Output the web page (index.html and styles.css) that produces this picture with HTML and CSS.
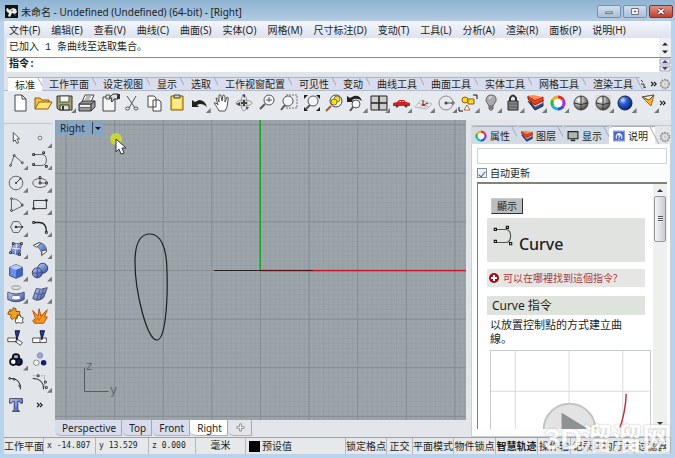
FILE: index.html
```html
<!DOCTYPE html>
<html lang="zh-CN">
<head>
<meta charset="utf-8">
<title>未命名 - Undefined</title>
<link rel="stylesheet" href="styles.css">
</head>
<body>
<svg class="defs" aria-hidden="true">
  <defs>
    <linearGradient id="blue" x1="0" y1="0" x2="1" y2="1"><stop offset="0" stop-color="#c3d2fb"/><stop offset="1" stop-color="#2b4fb0"/></linearGradient>
    <radialGradient id="gray" cx=".35" cy=".3" r=".8"><stop offset="0" stop-color="#fff"/><stop offset=".5" stop-color="#999"/><stop offset="1" stop-color="#333"/></radialGradient>
    <radialGradient id="ball" cx=".35" cy=".3" r=".8"><stop offset="0" stop-color="#cfe0ff"/><stop offset=".35" stop-color="#2c60d8"/><stop offset="1" stop-color="#04186c"/></radialGradient>
    <symbol id="wheel" viewBox="0 0 22 22"><circle cx="11" cy="11" r="6" fill="#fff"/><g fill="none" stroke-width="3"><path stroke="#e8302a" d="M11 5a6 6 0 0 1 5.200 3"/><path stroke="#b22ac8" d="M16.200 8a6 6 0 0 1 0 6"/><path stroke="#3450e0" d="M16.200 14a6 6 0 0 1-5.200 3"/><path stroke="#1cb8c8" d="M11 17a6 6 0 0 1-5.200-3"/><path stroke="#36b83a" d="M5.800 14a6 6 0 0 1 0-6"/><path stroke="#f0b020" d="M5.800 8A6 6 0 0 1 11 5"/></g></symbol>
    <symbol id="layers" viewBox="0 0 22 22"><path d="M3 9l7 9 8-4v-3l-8 3z" fill="#2448a8" stroke="#223"/><path d="M3 6l7 9 8-4V8l-8 3z" fill="#fff" stroke="#666"/><path d="M3 4l7 4 8-3v4l-8 4-7-6z" fill="#e8401c" stroke="#8a1c0c"/><path d="M3 4l5-1 10 2-8 3z" fill="#ff8a5c"/></symbol>
    <symbol id="gear" viewBox="0 0 22 22"><circle cx="11" cy="11" r="8" fill="none" stroke="#888" stroke-width="3" stroke-dasharray="3 2"/><circle cx="11" cy="11" r="6" fill="#eee" stroke="#888"/><circle cx="11" cy="11" r="2" fill="#fff" stroke="#888"/></symbol>
    <symbol id="lens" viewBox="0 0 22 22"><circle cx="13" cy="8" r="5" fill="#f3f5f7" stroke="#555"/><path d="M9 12l-5 5" stroke="#555" stroke-width="2"/></symbol>
    <symbol id="more" viewBox="0 0 22 22"><path d="M3 5l6 6-6 6M11 5l6 6-6 6" fill="none" stroke="#111" stroke-width="3"/></symbol>
    <symbol id="curve" viewBox="0 0 22 22"><path d="M5 5h8q5 0 5 6t-5 6H5" fill="none" stroke="#555"/><path d="M3 4h2v2H3zM14 2h2v2h-2zM3 15h2v2H3zM17 17h2v2h-2z" fill="#fff" stroke="#111"/></symbol>
  </defs>
</svg>

<div class="window">
  <header class="title">
    <svg class="logo" viewBox="0 0 13 13"><path d="M0 0h13v13H0z" fill="#111"/><path d="M1 4l2-1 1 2 4-2 3 1 1 3-2 2-3-1-2 4-2-1 1-3-2-1z" fill="#e8ece8"/><path d="M6 6l2-1M9 9l2 2" stroke="#555"/></svg>
    <h1>未命名 - Undefined (Undefined) (64-bit) - [Right]</h1>
    <button class="win" aria-label="最小化"><svg viewBox="0 0 24 13"><path d="M8 7h8v2H8z" fill="#fff" stroke="#555"/></svg></button>
    <button class="win" aria-label="还原"><svg viewBox="0 0 24 13"><path d="M8 3h8v7H8zM11 6h2v1h-2z" fill="#fff" stroke="#555"/></svg></button>
    <button class="win close" aria-label="关闭"><svg viewBox="0 0 24 13"><path d="M9 4l6 5M15 4l-6 5" stroke="#633" stroke-width="4"/><path d="M9 4l6 5M15 4l-6 5" stroke="#fff" stroke-width="2"/></svg></button>
  </header>

  <nav class="menu">
    <button>文件(F)</button><button>编辑(E)</button><button>查看(V)</button><button>曲线(C)</button><button>曲面(S)</button><button>实体(O)</button><button>网格(M)</button><button>尺寸标注(D)</button><button>变动(T)</button><button>工具(L)</button><button>分析(A)</button><button>渲染(R)</button><button>面板(P)</button><button>说明(H)</button>
  </nav>

  <section class="command">
    <div class="history"><p>已加入 1 条曲线至选取集合。</p><svg class="arrows" viewBox="0 0 12 18"><path d="M3 7l3-3 3 3zM3 12l3 3 3-3z" fill="#222"/></svg></div>
    <div class="prompt"><label for="cmd">指令:</label><input id="cmd" type="text"><svg class="arrows" viewBox="0 0 12 14"><path d="M1 1h10v5H1zM1 8h10v5H1z" fill="#e4e8f4" stroke="#aab"/><path d="M3 5l3-3 3 3zM3 9l3 3 3-3z" fill="#446"/></svg></div>
  </section>

  <nav class="tabs">
    <button class="on">标准</button><button>工作平面</button><button>设定视图</button><button>显示</button><button>选取</button><button>工作视窗配置</button><button>可见性</button><button>变动</button><button>曲线工具</button><button>曲面工具</button><button>实体工具</button><button>网格工具</button><button>渲染工具</button><span class="tab-end"><svg class="tick" viewBox="0 0 6 12"><path d="M1 2l2 2M1 6h3v4l2-1" fill="none" stroke="#333"/></svg><svg viewBox="0 0 22 22"><use href="#more"/></svg><svg class="cog" viewBox="0 0 22 22"><use href="#gear"/></svg></span>
  </nav>

  <div class="bar">
    <div class="tools">
      <button aria-label="新建"><svg viewBox="0 0 22 22"><path d="M6 3h7l4 4v12H6z" fill="#fff" stroke="#444"/><path d="M13 3v4h4" fill="none" stroke="#444"/></svg></button>
      <button aria-label="打开"><svg viewBox="0 0 22 22"><path d="M3 17V6h5l2 2h7v3" fill="#f4c23c" stroke="#8a5c08"/><path d="M3 17l4-7h13l-4 7z" fill="#ffe27c" stroke="#8a5c08"/></svg></button>
      <button class="fly" aria-label="保存"><svg viewBox="0 0 22 22"><path d="M3 4h15v14H5l-2-2z" fill="#a3a762" stroke="#333"/><path d="M6 4h9v6H6z" fill="#f4f4ee" stroke="#555"/><path d="M6 13h9v5H6z" fill="#ddd" stroke="#333"/><path d="M8 14h2v4H8z" fill="#333"/></svg></button>
      <button aria-label="打印"><svg viewBox="0 0 22 22"><path d="M6 10l3-7h9l-3 7z" fill="#fff" stroke="#444"/><path d="M10 5h5M9 7h5" stroke="#777"/><path d="M3 12l4-3h12v6l-4 4H3z" fill="#999" stroke="#333"/><path d="M3 12h12v7M15 12l4-3M4 15h10" fill="none" stroke="#333"/><path d="M4 13h10v2H4z" fill="#eee"/></svg></button>
      <button aria-label="属性"><svg viewBox="0 0 22 22"><path d="M4 5h12v14H4z" fill="#f4f4f4" stroke="#444"/><path d="M7 3h4v4H7z" fill="#ddd" stroke="#555"/><path d="M10 6l4-4h5v5h-4l-2 3-1-1 1-3z" fill="#ddd" stroke="#333"/><path d="M18 2h3v5h-3z" fill="#333"/></svg></button>
      <button aria-label="剪切"><svg viewBox="0 0 22 22"><path d="M6 4l8 12M15 4L8 16" stroke="#555" fill="none"/><ellipse cx="6.500" cy="16.500" rx="2" ry="1.500" fill="none" stroke="#555"/><ellipse cx="15" cy="16.500" rx="2" ry="1.500" fill="none" stroke="#555"/></svg></button>
      <button aria-label="复制"><svg viewBox="0 0 22 22"><path d="M4 4h6l2 2v9H4zM9 8h6l2 2v9H9z" fill="#fff" stroke="#444"/></svg></button>
      <button aria-label="粘贴"><svg viewBox="0 0 22 22"><path d="M5 4h12v14H5z" fill="#ffd94c" stroke="#7a5a08"/><path d="M7 7h8v9H7z" fill="#ffeb8c"/><path d="M8 3h6v3H8z" fill="#ccc" stroke="#444"/></svg></button>
      <button class="fly" aria-label="撤销"><svg viewBox="0 0 22 22"><path d="M3 8v7h7l-2-2q5-3 10 2-2-7-8-7l-4 2z" fill="#222"/></svg></button>
      <button aria-label="平移"><svg viewBox="0 0 22 22"><path d="M8 19q-1-3-5-8 2-1 4 2L5 6q2-1 3 4V3q2-1 2 1l1 5 1-6q2 0 2 2v5l2-5q2 0 1 3l-1 7q-1 2-2 4z" fill="#fff" stroke="#555"/></svg></button>
      <button aria-label="旋转视图"><svg viewBox="0 0 22 22"><g fill="none" stroke="#999"><ellipse cx="11" cy="11" rx="8" ry="3"/><ellipse cx="11" cy="11" rx="3" ry="8"/></g><path d="M11 8v6M8 11h6" stroke="#444" stroke-width="2"/><path d="M9 3l3-1v4zM3 12l4-2v4zM13 15h3l-2 3z" fill="#446"/></svg></button>
      <button aria-label="缩放"><svg viewBox="0 0 22 22"><use href="#lens"/><path d="M10 8h6M13 5v5" stroke="#555"/></svg></button>
      <button aria-label="框选缩放"><svg viewBox="0 0 22 22"><path d="M8 3h11v13H8z" fill="none" stroke="#777" stroke-dasharray="2 1"/><circle cx="10" cy="9" r="5" fill="#f3f5f7" stroke="#555"/><path d="M7 13l-4 5" stroke="#555" stroke-width="2"/></svg></button>
      <button aria-label="缩放至最大范围"><svg viewBox="0 0 22 22"><circle cx="12" cy="9" r="5" fill="#f3f5f7" stroke="#555"/><path d="M9 13l-4 4" stroke="#555" stroke-width="2"/><path d="M3 3h4L3 7zM19 3h-4l4 4zM3 19v-4l4 4zM19 19h-4l4-4z" fill="#222"/></svg></button>
      <button aria-label="缩放至选取物件"><svg viewBox="0 0 22 22"><circle cx="13" cy="9" r="6" fill="#f8f8e8" stroke="#444"/><circle cx="14" cy="7" r="3" fill="#ffe000" stroke="#776"/><circle cx="11" cy="10" r="3" fill="#ffe000" stroke="#776"/><path d="M8 14l-5 5" stroke="#a85c28" stroke-width="2"/></svg></button>
      <button class="fly" aria-label="复原视图"><svg viewBox="0 0 22 22"><path d="M2 4v6h7L7 8q5-3 10 1-2-6-8-5L5 6z" fill="#222"/><circle cx="11" cy="12" r="4" fill="#f3f5f7" stroke="#555"/><path d="M8 15l-3 4" stroke="#555" stroke-width="2"/></svg></button>
      <button class="fly" aria-label="四视图"><svg viewBox="0 0 22 22"><path d="M3 4h16v14H3z" fill="#ccc" stroke="#222"/><path d="M11 4v14M3 11h16" stroke="#222" stroke-width="1.500"/></svg></button>
      <button class="fly" aria-label="载具视图"><svg viewBox="0 0 22 22"><path d="M3 11l4-1 2-2h5l2 2 4 1v3H3z" fill="#d42020"/><path d="M10 9h1v1H9zM12 9h1l1 1h-2z" fill="#fcc"/><circle cx="7" cy="14" r="1.500" fill="#444"/><circle cx="16" cy="14" r="1.500" fill="#444"/></svg></button>
      <button class="fly" aria-label="设定工作平面"><svg viewBox="0 0 22 22"><path d="M2 15l6-7 11 4-5 5zM5 11l11 4M11 9l-4 7M15 11l-4 6" fill="none" stroke="#bbb"/><path d="M10 13V8M10 13l5-2" stroke="#444"/><path d="M9 12h3v2H9z" fill="#a33"/></svg></button>
      <button class="fly" aria-label="物件锁点"><svg viewBox="0 0 22 22"><circle cx="11" cy="11" r="7" fill="none" stroke="#888"/><path d="M11 11h8" stroke="#555"/><circle cx="11" cy="11" r="1.500" fill="#444"/><path d="M17 10h2v2h-2z" fill="#fff" stroke="#555"/></svg></button>
      <button class="fly" aria-label="选取"><svg viewBox="0 0 22 22"><circle cx="8" cy="8" r="3" fill="#ffd820" stroke="#876010"/><path d="M11 7h6v5h-6z" fill="#ffd820" stroke="#876010"/><path d="M7 18l3-5 3 5z" fill="#fff" stroke="#a65"/><path d="M16 3h4v4M2 15v4h4" fill="none" stroke="#111"/></svg></button>
      <button class="fly" aria-label="隐藏"><svg viewBox="0 0 22 22"><path d="M11 3q6 0 5 6l-3 5v3q-2 3-4 0v-3L6 9q0-6 5-6z" fill="#aaa" stroke="#666"/><path d="M9 7q1-3 3-2" fill="none" stroke="#fff"/><path d="M9 14h4M9 16h4" stroke="#555"/></svg></button>
      <button class="fly" aria-label="锁定"><svg viewBox="0 0 22 22"><path d="M8 10V6q3-5 6 0v4" fill="none" stroke="#333" stroke-width="2"/><path d="M6 9h10v9H6z" fill="#888" stroke="#222"/><path d="M7 12h8M7 15h8" stroke="#555"/></svg></button>
      <button class="fly" aria-label="图层"><svg viewBox="0 0 22 22"><use href="#layers"/></svg></button>
      <button class="fly" aria-label="颜色"><svg viewBox="0 0 22 22"><use href="#wheel"/></svg></button>
      <button aria-label="着色"><svg viewBox="0 0 22 22"><circle cx="11" cy="11" r="7" fill="url(#gray)" stroke="#444"/><path d="M11 4v14M4 11q7 3 14 0" fill="none" stroke="#333"/></svg></button>
      <button class="fly" aria-label="着色模式"><svg viewBox="0 0 22 22"><path d="M3 3h16v16H3z" fill="#ddd"/><circle cx="11" cy="11" r="7" fill="url(#gray)" stroke="#444"/><path d="M11 4v14M4 11q7 3 14 0" fill="none" stroke="#333"/></svg></button>
      <button class="fly" aria-label="渲染"><svg viewBox="0 0 22 22"><circle cx="11" cy="11" r="7" fill="url(#ball)" stroke="#123"/></svg></button>
      <button class="fly" aria-label="灯光"><svg viewBox="0 0 22 22"><path d="M5 5l12-2-3 11z" fill="#ffb428" stroke="#c05c10"/><path d="M5 5l12-2-5 5z" fill="#fff4c0" stroke="#555"/></svg></button>
    </div>
    <button class="overflow" aria-label="更多"><svg viewBox="0 0 22 22"><use href="#more"/></svg></button>
  </div>

  <main>
    <aside class="toolbox">
      <button aria-label="选择"><svg viewBox="0 0 22 22"><path d="M8 5v10l2-2 2 4 2-1-2-4h3z" fill="#fff" stroke="#444"/></svg></button>
      <button class="fly" aria-label="点"><svg viewBox="0 0 22 22"><circle cx="11" cy="11" r="2" fill="#fff" stroke="#666"/></svg></button>
      <button class="fly" aria-label="多重直线"><svg viewBox="0 0 22 22"><path d="M5 17L9 6l9 8" fill="none" stroke="#555"/><g fill="#fff" stroke="#222"><circle cx="5" cy="17" r="1"/><circle cx="9" cy="6" r="1"/><circle cx="18" cy="14" r="1"/></g></svg></button>
      <button class="fly" aria-label="曲线"><svg viewBox="0 0 22 22"><use href="#curve"/></svg></button>
      <button class="fly" aria-label="圆"><svg viewBox="0 0 22 22"><circle cx="11" cy="11" r="7.500" fill="none" stroke="#555"/><path d="M11 11l5-5" stroke="#222"/><circle cx="11" cy="11" r="1" fill="#222"/><circle cx="16" cy="6" r="1" fill="#222"/></svg></button>
      <button class="fly" aria-label="椭圆"><svg viewBox="0 0 22 22"><ellipse cx="11" cy="11" rx="8" ry="5" fill="none" stroke="#555"/><path d="M11 11V5M11 11h7" stroke="#555"/><path d="M10 10h2v2h-2zM10 4h2v2h-2zM17 10h2v2h-2z" fill="#fff" stroke="#222"/></svg></button>
      <button class="fly" aria-label="圆弧"><svg viewBox="0 0 22 22"><path d="M6 4v14l12-6Q15 4 6 4" fill="none" stroke="#555"/><g fill="#fff" stroke="#222"><circle cx="6" cy="4" r="1"/><circle cx="6" cy="17" r="1"/><circle cx="18" cy="11" r="1"/></g></svg></button>
      <button class="fly" aria-label="矩形"><svg viewBox="0 0 22 22"><path d="M4 6h14v9H4z" fill="none" stroke="#222"/><circle cx="4" cy="15" r="1.500" fill="#333"/><circle cx="18" cy="6" r="1.500" fill="#333"/></svg></button>
      <button class="fly" aria-label="多边形"><svg viewBox="0 0 22 22"><path d="M5 11l3-6h6l4 6-4 6H8z" fill="none" stroke="#555"/><path d="M11 11h7" stroke="#222"/><circle cx="11" cy="11" r="1.500" fill="#333"/><circle cx="18" cy="11" r="1" fill="#333"/></svg></button>
      <button class="fly" aria-label="圆角"><svg viewBox="0 0 22 22"><path d="M5 6h5q8 0 8 10" fill="none" stroke="#222" stroke-width="1.500"/><path d="M3 5h2v2H3zM17 16h2v2h-2z" fill="#fff" stroke="#111"/></svg></button>
      <button class="fly" aria-label="曲面"><svg viewBox="0 0 22 22"><path d="M8 5h9l-2 13-10-3z" fill="url(#blue)" stroke="#557"/><path d="M12 5l-2 12M6 10l10 1" stroke="#eef"/><path d="M7 4h2v2H7zM16 4h2v2h-2zM14 16h2v2h-2zM4 14h2v2H4z" fill="#fff" stroke="#222"/></svg></button>
      <button class="fly" aria-label="旋转曲面"><svg viewBox="0 0 22 22"><path d="M4 7l6-3q8 1 8 9l-5 5q0-9-9-11z" fill="url(#blue)" stroke="#557"/><path d="M4 7l6-3 2 1-5 4zM13 13l5-1v2l-5 4z" fill="#fff" stroke="#444"/></svg></button>
      <button class="fly" aria-label="立方体"><svg viewBox="0 0 22 22"><path d="M4 7l7-3 7 3v9l-7 3-7-3z" fill="#6c90e8" stroke="#346"/><path d="M4 7l7-3 7 3-7 3z" fill="#b8ccff"/><path d="M11 10l7-3v9l-7 3z" fill="#3f65c0"/></svg></button>
      <button class="fly" aria-label="布尔运算"><svg viewBox="0 0 22 22"><circle cx="14" cy="8" r="5.500" fill="url(#blue)" stroke="#335"/><circle cx="8" cy="13" r="5.500" fill="url(#blue)" stroke="#335"/><path d="M8 8v10M3 13q5 2 10-1" fill="none" stroke="#446"/></svg></button>
      <button class="fly" aria-label="投影曲线"><svg viewBox="0 0 22 22"><ellipse cx="11" cy="4" rx="5" ry="2" fill="none" stroke="#888"/><path d="M2 9q9 4 18 0v8q-9 5-18 0z" fill="url(#blue)" stroke="#446"/><ellipse cx="11" cy="15" rx="5" ry="2.500" fill="#fff" stroke="#668"/></svg></button>
      <button class="fly" aria-label="网格"><svg viewBox="0 0 22 22"><path d="M7 5q5 2 12-1l-4 11q-6 5-12 1z" fill="url(#blue)" stroke="#446"/><path d="M5 10q6 3 12 0M11 6l-4 12M15 5l-4 12" fill="none" stroke="#557"/></svg></button>
      <button aria-label="组合"><svg viewBox="0 0 22 22"><path d="M13 10h3v2l3 1-1 3 1 2-3 1-2-1-3 1-1-4 2-1z" fill="#fff" stroke="#444"/><path d="M4 4l3 1 1-3 3 1v3l4 0 0 4-3 0v4l-3-1-2 2-2-2 1-3-4-1 1-3 2 0z" fill="#f5a01c" stroke="#7a4c08"/></svg></button>
      <button aria-label="炸开"><svg viewBox="0 0 22 22"><path d="M3 5l6 6 1-8 2 8 7-7-3 8 3 0-4 7H5l-2-3 3-2z" fill="#f59a18" stroke="#b04810"/><path d="M5 18l4-5 1 3 5-8" fill="none" stroke="#c86018"/></svg></button>
      <button aria-label="修剪"><svg viewBox="0 0 22 22"><path d="M2 11h10v4H2zM12 12l6 4-2 3-6-4z" fill="#fff" stroke="#444"/><path d="M10 3h5l-3 10z" fill="#243c9c" stroke="#113"/></svg></button>
      <button aria-label="分割"><svg viewBox="0 0 22 22"><path d="M3 11h15v5H3zM11 11v5" fill="#fff" stroke="#444"/><path d="M11 3h5l-3 10z" fill="#243c9c" stroke="#113"/></svg></button>
      <button class="fly" aria-label="群组"><svg viewBox="0 0 22 22"><g stroke="#111" stroke-width="2"><circle cx="11" cy="8" r="3.500" fill="#99a4e8"/><circle cx="14" cy="13" r="3.500" fill="#151d70"/><circle cx="8" cy="13" r="3.500" fill="#fff"/></g></svg></button>
      <button aria-label="解散群组"><svg viewBox="0 0 22 22"><circle cx="11" cy="6" r="3" fill="#99a4e8" stroke="#88a"/><circle cx="7" cy="14" r="3" fill="#fff" stroke="#777"/><circle cx="15" cy="14" r="3" fill="#151d70"/></svg></button>
      <button aria-label="编辑点"><svg viewBox="0 0 22 22"><path d="M4 6q12-1 12 12" fill="none" stroke="#111"/><g fill="#fff" stroke="#111"><circle cx="4" cy="6" r="1"/><circle cx="9" cy="7" r="1"/><circle cx="15" cy="14" r="1"/></g></svg></button>
      <button class="fly" aria-label="控制点"><svg viewBox="0 0 22 22"><path d="M3 6q12 0 12 12" fill="none" stroke="#111"/><path d="M3 3h13v14" fill="none" stroke="#999" stroke-dasharray="2 1"/><path d="M8 2h2v2H8zM16 9h2v2h-2zM17 15h2v2h-2z" fill="#fff" stroke="#333"/></svg></button>
      <button aria-label="文字物件"><svg viewBox="0 0 22 22"><path d="M4 4h14v5h-2l-1-2h-2v9l2 2H7l2-2V7H7L6 9H4z" fill="url(#blue)" stroke="#335"/></svg></button>
      <button aria-label="更多工具"><svg class="small" viewBox="0 0 22 22"><use href="#more"/></svg></button>
    </aside>

    <section class="view">
      <div class="canvas">
        <svg class="scene">
          <defs>
            <pattern id="minor" width="4.860" height="4.860" patternUnits="userSpaceOnUse" x="205" y="150"><path d="M.5 0v4.860M0 .5h4.860" stroke="#919a9f" fill="none" stroke-width=".6"/></pattern>
            <pattern id="major" width="48.600" height="48.600" patternUnits="userSpaceOnUse" x="205" y="150"><path d="M.5 0v48.600M0 .5h48.600" stroke="#848c91" fill="none"/></pattern>
          </defs>
          <rect width="100%" height="100%" fill="url(#minor)"/>
          <rect width="100%" height="100%" fill="url(#major)"/>
          <rect x="204.500" width="1.500" height="150" fill="#18a028"/>
          <rect x="205" y="149.800" width="100%" height="1.500" fill="#c81c24"/>
          <rect x="159" y="150" width="46" height="1" fill="#222"/>
          <rect x="205" y="150" width="53" height="1" fill="#5a1014"/>
          <path d="M95 114C85 114 80 124 80 142C80 172 92 220 102 220C110 220 113 184 112 152C112 126 105 114 95 114z" fill="none" stroke="#1c1f20" stroke-width="1.200"/>
          <path d="M29.500 248v23.500h24" fill="none" stroke="#555d61"/>
          <text x="31" y="250">z</text><text x="55" y="274">y</text>
        </svg>
        <button class="label">Right<span></span></button>
        <svg class="cursor" viewBox="0 0 20 24"><circle cx="6" cy="7" r="6" fill="#c8d43c"/><path d="M6 7v13l3-3 2 5 3-1-2-5h4z" fill="#fff" stroke="#333"/></svg>
      </div>
      <nav class="sheets"><button>Perspective</button><button>Top</button><button>Front</button><button class="on">Right</button><button class="add" aria-label="新增"><svg viewBox="0 0 10 10"><path d="M4 1h2v3h3v2H6v3H4V6H1V4h3z" fill="#fff" stroke="#888"/></svg></button></nav>
    </section>

    <aside class="panel">
      <nav class="ptabs">
        <button><svg viewBox="3 3 16 16"><use href="#wheel" width="22" height="22"/></svg>属性</button>
        <button><svg viewBox="2 2 17 17"><use href="#layers" width="22" height="22"/></svg>图层</button>
        <button><svg viewBox="0 0 22 22"><path d="M2 3h18v13H2z" fill="#aab8b0" stroke="#222" stroke-width="2"/><path d="M7 19h8" stroke="#222" stroke-width="3"/></svg>显示</button>
        <button class="on"><svg viewBox="0 0 22 22"><path d="M1 2h20v18H1z" fill="#4466c4" stroke="#8aa0dc" stroke-width="2"/><path d="M6 16v-6q5-7 10 0v6M9 10q2-3 4 0l-2 3v1M11 16v2" fill="none" stroke="#fff" stroke-width="2"/></svg>说明</button>
        <svg class="pgear" viewBox="0 0 22 22"><use href="#gear"/></svg>
      </nav>
      <div class="pbody">
        <input class="search" type="text" aria-label="搜索">
        <label class="auto"><input type="checkbox" checked>自动更新</label>
        <div class="help">
          <article>
            <button class="show">顯示</button>
            <h2><svg viewBox="0 0 22 22"><use href="#curve"/></svg>Curve</h2>
            <a class="where" href="#where"><svg viewBox="0 0 10 10"><circle cx="5" cy="5" r="5" fill="#a01420"/><path d="M5 2v6M2 5h6" stroke="#fff" stroke-width="2"/></svg>可以在哪裡找到這個指令?</a>
            <h3>Curve 指令</h3>
            <p>以放置控制點的方式建立曲線。</p>
            <div class="video"><svg viewBox="0 0 160 110"><path d="M24.500 0v110M78.500 0v110M132.500 0v110M0 40.500h160" stroke="#dcdcde"/><path d="M136 43q-1 25-11 45" fill="none" stroke="#b43840" stroke-width="1.500"/><circle cx="79" cy="79" r="26" fill="#e2e3e2" stroke="#c2c4c4" stroke-width="2"/><path d="M71 62l26 16-26 16z" fill="#8f9292"/></svg></div>
          </article>
          <div class="scroll"><svg viewBox="0 0 12 12"><path d="M3 8l3-3 3 3z" fill="#333"/></svg><span class="thumb"></span><svg class="down" viewBox="0 0 12 12"><path d="M3 5l3 3 3-3z" fill="#333"/></svg></div>
        </div>
      </div>
    </aside>
  </main>

  <footer>
    <button>工作平面</button><span class="num">x -14.807</span><span class="num">y 13.529</span><span class="num">z 0.000</span><span class="unit">毫米</span><button class="layer"><i></i>预设值</button><button>锁定格点</button><button>正交</button><button>平面模式</button><button>物件锁点</button><button class="bold">智慧轨迹</button><button>操作轴</button><button>记录建构历史</button><button>过滤器</button>
  </footer>
  <div class="mark">3D溜溜网</div>
</div>
</body>
</html>
```
FILE: styles.css
```css
* { box-sizing: border-box; }
body {
  margin: 0;
  font: 10px/14px "Noto Sans", "Noto Sans CJK SC", sans-serif;
  color: #1c1e22;
}
button {
  margin: 0;
  padding: 0;
  border: 0;
  background: none;
  color: inherit;
  font: inherit;
  white-space: nowrap;
}
h1, h2, h3, p { margin: 0; font: inherit; }
svg { display: block; }
.defs { position: absolute; width: 0; height: 0; }

.window {
  position: relative;
  display: flex;
  flex-direction: column;
  height: 100vh;
  padding: 0 4px 4px;
  overflow: hidden;
  background: #b9d3ec;
}

.title {
  display: flex;
  align-items: center;
  gap: 2px;
  height: 21px;
  margin: 0 -4px;
  padding: 2px 2px 0 5px;
  background: linear-gradient(#8fb4d2, #a3c1dc 60%, #b5cbe2);
}
.logo { width: 13px; height: 13px; }
.title h1 { flex: 1; padding-left: 1px; }
.win {
  width: 24px;
  height: 13px;
  border: 1px solid #7890aa;
  border-radius: 2px;
  background: linear-gradient(#cfdfee, #a9c1da);
}
.win.close { border-color: #7a3434; background: linear-gradient(#dc9488, #c0402c); }
.win svg { width: 100%; height: 100%; }

.menu {
  display: flex;
  gap: 11px;
  height: 17px;
  padding-left: 5px;
  background: linear-gradient(#f4f6fb, #dde2ef);
}

.command { padding: 0 0 5px 3px; background: #dfe3ea; }
.command > div { display: flex; align-items: center; padding-left: 2px; background: #fff; font-family: "Liberation Mono", "Noto Sans CJK SC", monospace; }
.history { height: 20px; border-bottom: 1px solid #858a90; }
.history p { flex: 1; }
.prompt { height: 14px; }
.prompt label { font-weight: bold; }
.prompt input { flex: 1; min-width: 0; height: 12px; border: 0; outline: 0; background: none; }
.arrows { width: 12px; height: 100%; background: #eef0f4; }

.tabs {
  display: flex;
  height: 14px;
  padding: 0 0 0 4px;
  background: #dfe3ea;
  border-bottom: 1px solid #b5bac8;
}
.tabs button {
  position: relative;
  padding: 0 7px;
  border-top: 1px solid #aeb4c2;
  background: #d8dcec;
  line-height: 12px;
}
.tabs button::after, .ptabs button::after, .sheets button::after {
  content: "";
  position: absolute;
  top: 0;
  bottom: 0;
  right: 0;
  width: 1px;
  background: #a2a8b6;
  transform: skewX(28deg);
}
.tabs .on { background: #fff; margin-bottom: -1px; }
.tab-end { flex: 1; display: flex; align-items: center; justify-content: flex-end; gap: 1px; }
.tab-end svg { flex: none; width: 8px; height: 8px; }
.tab-end .tick { width: 6px; height: 12px; margin-right: 3px; }
.tab-end .cog { width: 12px; height: 12px; }

.bar { display: flex; height: 29px; padding: 0 0 6px 5px; background: #e6e9ee; }
.tools { flex: 1; display: grid; grid-template-columns: repeat(29, 1fr); }
.tools button, .toolbox button { position: relative; display: grid; place-items: center; }
.tools svg, .toolbox svg { width: 22px; height: 22px; }
.fly::after {
  content: "";
  position: absolute;
  right: 0;
  bottom: 1px;
  width: 5px;
  height: 5px;
  background: #777;
  clip-path: polygon(100% 0, 100% 100%, 0 100%);
}
.overflow { width: 12px; }
.overflow svg, .toolbox .small { width: 8px; height: 8px; }

main { flex: 1; min-height: 0; display: flex; background: #e2e6eb; }
.toolbox {
  flex: none;
  width: 48px;
  height: 293px;
  margin: 3px 3px 0 0;
  padding-top: 3px;
  border-top: 1px solid #c5c8b4;
  display: grid;
  grid-template: repeat(13, 1fr) / 1fr 1fr;
}
.toolbox button { min-height: 0; }
.toolbox svg { width: 20px; height: 20px; }

.view { flex: 1; min-width: 0; display: flex; flex-direction: column; }
.canvas { position: relative; flex: 1; min-height: 0; overflow: hidden; background: #9ca5aa; }
.scene { width: 100%; height: 100%; }
.scene text { font: 12px "DejaVu Sans", sans-serif; fill: #62696d; }
.label {
  position: absolute;
  top: 1px;
  left: 0;
  display: flex;
  align-items: center;
  height: 14px;
  padding: 0 2px 0 5px;
  background: #86a5c5;
}
.label span { margin-left: 7px; padding-left: 2px; border-left: 1px solid #345; height: 12px; display: grid; place-items: center; }
.label span::after { content: ""; border: 3px solid transparent; border-top-color: #112; border-bottom: 0; }
.cursor { position: absolute; left: 55px; top: 12px; width: 20px; height: 24px; }
.sheets { display: flex; height: 17px; padding-bottom: 1px; }
.sheets button {
  position: relative;
  padding: 0 6px 0 7px;
  background: #d9dcec;
  border-bottom: 1px solid #aeb2c0;
  border-radius: 0 0 0 6px;
}
.sheets button::after { transform: none; }
.sheets .on { background: #fff; }
.sheets .add { width: 24px; background: none; display: grid; place-items: center; }
.sheets svg { width: 9px; height: 9px; }

.panel {
  flex: none;
  width: 30%;
  min-width: 0;
  margin: 5px 0 0 5px;
  display: flex;
  flex-direction: column;
  border-top: 1px solid #c5c8b4;
}
.ptabs { display: flex; height: 18px; }
.ptabs button {
  position: relative;
  display: flex;
  align-items: center;
  gap: 3px;
  padding: 0 7px 0 4px;
  border-top: 1px solid #a8b0bc;
  background: #d3dce6;
  border-radius: 4px 0 0 0;
}
.ptabs button svg { width: 12px; height: 12px; }
.ptabs .on { background: #fff; }
.pgear { width: 12px; height: 12px; margin: 5px 0 0 auto; }
.pbody {
  flex: 1;
  min-height: 0;
  display: flex;
  flex-direction: column;
  padding: 4px 3px 7px 5px;
  background: #fbfcfc;
  border: 1px solid #c9ced6;
  border-width: 0 1px 1px;
}
.search { width: 100%; height: 16px; border: 1px solid #cdd2d8; background: #fff; }
.auto { display: flex; align-items: center; gap: 3px; height: 18px; }
.auto input { appearance: none; width: 10px; height: 10px; margin: 0; border: 1px solid #8a9098; background: #eef2f6; display: grid; place-items: center; }
.auto input:checked::after { content: ""; width: 3px; height: 6px; border: solid #4c5c98; border-width: 0 1px 1px 0; transform: rotate(40deg); }
.help {
  flex: 1;
  min-height: 0;
  display: flex;
  overflow: hidden;
  border: 1px solid #80827c;
  border-width: 2px 0 0 1px;
  background: #fff;
}
article { flex: 1; min-width: 0; padding: 14px 8px 0 9px; font-family: "Noto Sans", "Noto Sans CJK TC", sans-serif; }
.show { display: block; margin: 0 0 4px 4px; width: 32px; height: 16px; border: 1px solid #888; border-color: #ccc #333 #333 #ccc; background: #bdbdbd; }
article h2 { display: flex; align-items: flex-end; gap: 4px; height: 44px; padding: 0 0 6px 4px; background: #e1e3e1; font: 500 16px/24px "Noto Sans", sans-serif; }
article h2 svg { width: 24px; height: 24px; margin-bottom: 8px; }
.where { display: flex; align-items: center; gap: 4px; height: 18px; margin: 7px 0 9px; padding-left: 2px; background: #e6e7e5; color: #a83840; text-decoration: none; white-space: nowrap; }
.where svg { width: 10px; height: 10px; }
article h3 { height: 19px; padding-left: 5px; background: #dfe3dd; font-size: 12px; line-height: 19px; }
article p { margin: 3px 0 4px 3px; padding-right: 16px; font-size: 11px; line-height: 14px; }
.video { margin: 0 -6px 0 3px; border: 1px solid #c8cad2; }
.scroll { width: 14px; display: flex; flex-direction: column; align-items: center; background: #eef0f0; }
.scroll svg { width: 12px; height: 12px; }
.thumb { width: 12px; height: 46px; border: 1px solid #999; border-radius: 2px; background: linear-gradient(90deg, #f4f4f6, #c9ccd2); display: grid; place-items: center; }
.thumb::after { content: ""; width: 5px; height: 6px; background: repeating-linear-gradient(#555 0 1px, #eee 1px 2px); }
.scroll .down { margin-top: auto; }

footer {
  display: grid;
  grid-template-columns: 40fr 52fr 53fr 47fr 50fr 100fr 41fr 26fr 41fr 42fr 42fr 33fr 64fr 36fr;
  height: 17px;
  border-top: 1px solid #9ca2a8;
  background: #e6e8ea;
}
footer > * { min-width: 0; overflow: hidden; padding: 0; border-right: 1px solid #b4b8bc; text-align: center; white-space: nowrap; line-height: 15px; }
.num { padding-left: 3px; font-family: "DejaVu Sans Mono", monospace; font-size: 8px; text-align: left; }
.layer { display: flex; align-items: center; gap: 2px; padding-left: 3px; }
.layer i { width: 11px; height: 11px; background: #000; }
.bold { font-weight: bold; }

.mark {
  position: absolute;
  right: 3px;
  bottom: 2px;
  color: #fff;
  opacity: .8;
  font: bold 30px/34px "Liberation Sans", "Noto Sans CJK SC", sans-serif;
  text-shadow: 0 0 2px #999;
}
```
